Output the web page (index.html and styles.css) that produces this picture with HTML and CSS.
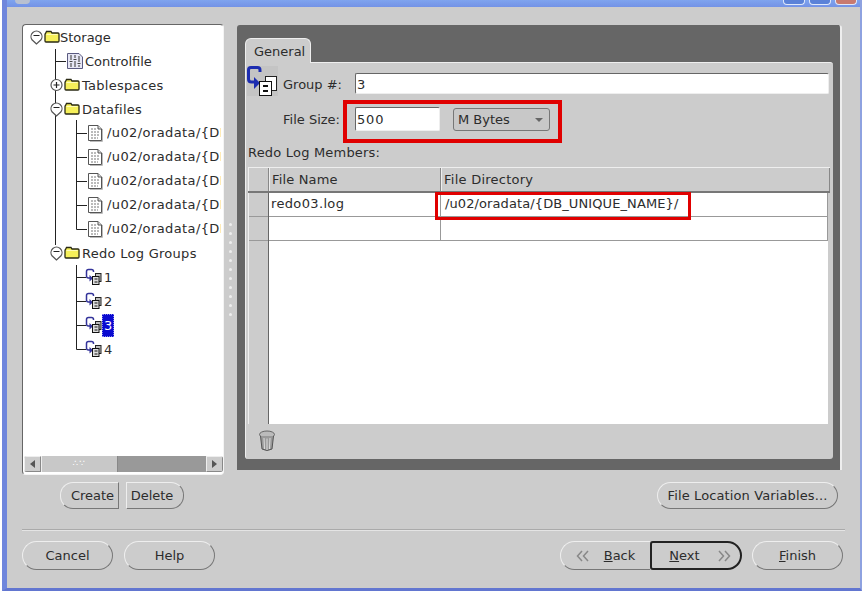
FILE: index.html
```html
<!DOCTYPE html>
<html lang="en">
<head>
<meta charset="utf-8">
<title>Storage</title>
<link rel="stylesheet" href="styles.css">
</head>
<body>
<svg class="defs" width="0" height="0" aria-hidden="true">
  <symbol id="folder" viewBox="0 0 16 14">
    <path d="M1.500 3.500 L2.500 1.500 H7 L8 3 H14 Q15 3 15 4 V11 Q15 12 14 12 H2 Q1 12 1 11 V4.500 Q1 3.500 1.500 3.500Z" fill="#f6f05a" stroke="#2a2a14" stroke-width="1.300"/>
    <path d="M2.500 4.500 H13.500" stroke="#fffcb8" stroke-width="1"/>
  </symbol>
  <symbol id="minus" viewBox="0 0 15 16">
    <path d="M7.500 15 L3 10.800 A5.500 5.500 0 1 1 12 10.800Z" fill="#fff" stroke="#555" stroke-width="1.200"/>
    <path d="M4.500 6.500 H10.500" stroke="#222" stroke-width="1.200"/>
  </symbol>
  <symbol id="plus" viewBox="0 0 15 16">
    <circle cx="7.500" cy="8" r="5.500" fill="#fff" stroke="#555" stroke-width="1.200"/>
    <path d="M4.500 8 H10.500 M7.500 5 V11" stroke="#222" stroke-width="1.200"/>
  </symbol>
  <symbol id="doc" viewBox="0 0 16 18">
    <path d="M1.500 1.500 H11 L14.500 5 V16.500 H1.500Z" fill="#fff" stroke="#555" stroke-width="1"/>
    <path d="M11 1.500 V5 H14.500" fill="#ddd" stroke="#555"/>
    <path d="M4 5 H9 M4 8 H12 M4 11 H12 M4 14 H11" stroke="#777" stroke-width="1" stroke-dasharray="2 1"/>
    <path d="M15.500 5 V17.500 H3" fill="none" stroke="#bbb"/>
  </symbol>
  <symbol id="ctl" viewBox="0 0 18 18">
    <path d="M1.500 1.500 H13 L16.500 5 V16.500 H1.500Z" fill="#e6e6f4" stroke="#5a5a80"/>
    <path d="M5 3 V8 M5 11 V15 M9 3 V6 M9 9 V15 M13 4 V10 M13 13 V15" stroke="#444" stroke-width="1.100"/>
    <path d="M3.500 9.500 H6.500 M7.500 7.500 H10.500 M11.500 11.500 H14.500" stroke="#444" stroke-width="1.100"/>
  </symbol>
  <symbol id="grp" viewBox="0 0 17 18">
    <path d="M8.500 4 V3.500 Q8.500 1.500 6.500 1.500 H3.500 Q1.500 1.500 1.500 3.500 V8 Q1.500 10 3.500 10 H5" fill="none" stroke="#33339a" stroke-width="1.500"/>
    <path d="M4.500 7 L8 10.300 L4.500 13.500Z" fill="#33339a"/>
    <rect x="10.500" y="5.500" width="5.500" height="8" fill="#bbb" stroke="#222"/>
    <rect x="7.500" y="8.500" width="6.500" height="8" fill="#ddd" stroke="#111"/>
    <path d="M9.500 11 H12.500 M9.500 14 H12.500" stroke="#111"/>
  </symbol>
</svg>

<div class="frame">
  <header class="titlebar">
    <span class="ticon"></span>
    <span class="tbtns"><i class="tb"></i><i class="tb"></i><i class="tb tb-close"></i></span>
  </header>

  <main class="content">
    <div class="split">
      <section class="treebox">
        <div class="tree">
          <svg class="lines" width="198" height="340" aria-hidden="true">
            <path d="M32.500 24 V220 M32.500 36.500 H43 M53.500 95 V204.500 H64 M53.500 108.500 H64 M53.500 132.500 H64 M53.500 156.500 H64 M53.500 180.500 H64 M53.500 240 V324.500 H63 M53.500 252.500 H63 M53.500 276.500 H63 M53.500 300.500 H63" fill="none" stroke="#222" stroke-width="1"/>
          </svg>
          <div class="row l0"><svg class="exp"><use href="#minus"/></svg><svg class="fld"><use href="#folder"/></svg><span>Storage</span></div>
          <div class="row lc"><svg class="ctl"><use href="#ctl"/></svg><span>Controlfile</span></div>
          <div class="row l1"><svg class="exp"><use href="#plus"/></svg><svg class="fld"><use href="#folder"/></svg><span class="gap2">Tablespaces</span></div>
          <div class="row l1"><svg class="exp"><use href="#minus"/></svg><svg class="fld"><use href="#folder"/></svg><span class="gap2">Datafiles</span></div>
          <div class="row lf"><svg class="doc"><use href="#doc"/></svg><span class="path">/u02/oradata/{DB</span></div>
          <div class="row lf"><svg class="doc"><use href="#doc"/></svg><span class="path">/u02/oradata/{DB</span></div>
          <div class="row lf"><svg class="doc"><use href="#doc"/></svg><span class="path">/u02/oradata/{DB</span></div>
          <div class="row lf"><svg class="doc"><use href="#doc"/></svg><span class="path">/u02/oradata/{DB</span></div>
          <div class="row lf"><svg class="doc"><use href="#doc"/></svg><span class="path">/u02/oradata/{DB</span></div>
          <div class="row l1"><svg class="exp"><use href="#minus"/></svg><svg class="fld"><use href="#folder"/></svg><span class="gap2">Redo Log Groups</span></div>
          <div class="row lg"><svg class="grp"><use href="#grp"/></svg><span>1</span></div>
          <div class="row lg"><svg class="grp"><use href="#grp"/></svg><span>2</span></div>
          <div class="row lg"><svg class="grp"><use href="#grp"/></svg><span class="sel">3</span></div>
          <div class="row lg"><svg class="grp"><use href="#grp"/></svg><span>4</span></div>
        </div>
        <div class="hscroll">
          <span class="sbtn"><i class="arr-l"></i></span>
          <span class="thumb">∴∵</span>
          <span class="track"></span>
          <span class="sbtn sbtn-r"><i class="arr-r"></i></span>
        </div>
      </section>

      <div class="splitter"><i></i><i></i><i></i><i></i><i></i><i></i><i></i><i></i><i></i><i></i><i></i></div>

      <section class="tabs">
        <div class="tab">General</div>
        <div class="panel">
          <div class="f-group">
            <svg class="gicon" width="31" height="30" viewBox="0 0 31 30" aria-hidden="true">
              <rect x="0" y="0" width="31" height="30" fill="#c4c4c4"/>
              <path d="M13 6 V4 Q13 1.500 10.500 1.500 H4 Q1.500 1.500 1.500 4 V13 Q1.500 16 4.500 16 H9" fill="none" stroke="#1c2cb0" stroke-width="3"/>
              <path d="M7 11 L13 17 L7 23Z" fill="#1c2cb0"/>
              <rect x="18.500" y="10.500" width="11" height="14" fill="#fff" stroke="#222"/>
              <rect x="12.500" y="15.500" width="12" height="14" fill="#fff" stroke="#111"/>
              <path d="M16 20 H21 M16 25 H21" stroke="#111" stroke-width="2"/>
            </svg>
            <label class="lbl-g">Group #:</label>
            <div class="input grow">3</div>
          </div>
          <div class="f-size">
            <label class="lbl-s">File Size:</label>
            <div class="redbox">
              <div class="input sz">500</div>
              <div class="combo"><span>M Bytes</span><i class="caret"></i></div>
            </div>
          </div>
          <div class="members">Redo Log Members:</div>
          <div class="table">
            <div class="thead">
              <div class="th-corner"></div>
              <div class="th">File Name</div>
              <div class="th">File Directory</div>
            </div>
            <div class="tbody">
              <div class="rowheads"><div class="rh"></div><div class="rh"></div></div>
              <div class="cells">
                <div class="tr"><div class="td">redo03.log</div><div class="td">/u02/oradata/{DB_UNIQUE_NAME}/</div></div>
                <div class="tr"><div class="td"></div><div class="td"></div></div>
              </div>
            </div>
            <div class="redcell"></div>
          </div>
          <div class="panel-foot">
            <svg width="18" height="22" viewBox="0 0 18 22" aria-hidden="true">
              <ellipse cx="9" cy="4.500" rx="7.500" ry="3.500" fill="#bbb" stroke="#666"/>
              <path d="M2.500 6 L4 19 Q9 22 14 19 L15.500 6" fill="#999" stroke="#555"/>
              <path d="M6 8 L6.500 19 M9 8.500 V20 M12 8 L11.500 19" stroke="#ddd"/>
            </svg>
          </div>
        </div>
      </section>
    </div>

    <div class="actions">
      <div class="pair">
        <button class="btn seg-l" type="button">Create</button>
        <button class="btn seg-r" type="button">Delete</button>
      </div>
      <button class="btn flv" type="button">File Location Variables...</button>
    </div>

    <hr class="sep">

    <footer class="nav">
      <div class="nav-l">
        <button class="btn wide" type="button">Cancel</button>
        <button class="btn wide" type="button">Help</button>
      </div>
      <div class="nav-r">
        <div class="wiz">
          <button class="btn back" type="button"><svg width="14" height="14" viewBox="0 0 14 14" aria-hidden="true"><path d="M6 2 L1.500 7 L6 12 M12 2 L7.500 7 L12 12" fill="none" stroke="#888" stroke-width="1.500"/></svg><span><u>B</u>ack</span></button>
          <button class="btn next" type="button"><span><u>N</u>ext</span><svg width="14" height="14" viewBox="0 0 14 14" aria-hidden="true"><path d="M2 2 L6.500 7 L2 12 M8 2 L12.500 7 L8 12" fill="none" stroke="#888" stroke-width="1.500"/></svg></button>
        </div>
        <button class="btn wide" type="button"><span><u>F</u>inish</span></button>
      </div>
    </footer>
  </main>
</div>
</body>
</html>
```

FILE: styles.css
```css
* { box-sizing: border-box; }
html, body { margin: 0; padding: 0; background: #fff; }
body { width: 864px; height: 595px; overflow: hidden; font: 13px/1 "DejaVu Sans", sans-serif; color: #2c2c2c; }
.defs { position: absolute; }

.frame { width: 860px; height: 591px; margin-left: 2px; background: #ccc; border-left: 5px solid #6f86dc; border-right: 2px solid #8ea2e0; border-bottom: 3px solid #6276d0; display: flex; flex-direction: column; }

.titlebar { height: 7px; background: linear-gradient(#7fa4ee, #7392e6); display: flex; justify-content: space-between; flex: none; overflow: hidden; }
.ticon { width: 15px; height: 4px; margin-left: 8px; background: #b8c0d0; border-radius: 0 0 7px 7px; }
.tbtns { display: flex; gap: 4px; margin-right: 3px; }
.tb { width: 22px; height: 5px; background: #5b82d8; border: 1px solid #dfe8fa; border-top: 0; border-radius: 0 0 4px 4px; }
.tb-close { background: #c87a70; }

.content { padding: 17px 15px 0 15px; flex: 1; display: flex; flex-direction: column; }
.split { display: flex; height: 451px; flex: none; }

.treebox { width: 202px; height: 451px; background: #fff; border: 1px solid #f4f4f4; border-top-color: #666; border-left-color: #666; border-radius: 4px; display: flex; flex-direction: column; overflow: hidden; }
.tree { position: relative; flex: 1; overflow: hidden; }
.lines { position: absolute; left: 0; top: 0; }
.row { position: relative; height: 24px; display: flex; align-items: center; white-space: nowrap; }
.row svg { flex: none; }
.l0 { padding-left: 6px; }
.l1 { padding-left: 26px; }
.lc { padding-left: 43px; }
.lf { padding-left: 64px; }
.lg { padding-left: 62px; }
.exp { width: 15px; height: 16px; }
.fld { width: 16px; height: 14px; }
.ctl { width: 18px; height: 18px; margin-right: 1px; }
.doc { width: 16px; height: 18px; margin-right: 4px; }
.grp { width: 17px; height: 18px; margin-right: 2px; }
.gap2 { margin-left: 2px; letter-spacing: .28px; }
.path { display: block; width: 114px; overflow: hidden; letter-spacing: .4px; line-height: 16px; }
.sel { background: #0a0ad0; color: #fff; padding: 5px 2px; margin-left: -2px; outline: 1px dotted #8888ee; outline-offset: -1px; }

.hscroll { height: 16px; margin: 0 0 2px 1px; display: flex; background: #ccc; border-radius: 3px; overflow: hidden; flex: none; }
.sbtn { width: 17px; background: #ccc; border: 1px solid #888; border-top-color: #eee; border-left-color: #eee; display: flex; align-items: center; justify-content: center; flex: none; }
.thumb { width: 77px; background: #c8c8c8; border-left: 1px solid #eee; border-right: 1px solid #888; color: #fff; font-size: 9px; letter-spacing: 1px; text-align: center; line-height: 15px; flex: none; }
.track { flex: 1; background: #999; }
.arr-l { border: 4px solid transparent; border-right: 5px solid #555; border-left: 0; }
.arr-r { border: 4px solid transparent; border-left: 5px solid #555; border-right: 0; }

.splitter { width: 13px; display: flex; flex-direction: column; align-items: center; justify-content: center; gap: 6px; padding-top: 40px; flex: none; }
.splitter i { width: 3px; height: 3px; background: #eee; border-radius: 50%; }

.tabs { width: 605px; height: 445px; margin-top: 1px; background: #666; border-right: 2px solid #eee; border-radius: 3px 3px 0 0; padding: 13px 7px 11px 8px; display: flex; flex-direction: column; flex: none; position: relative; }
.tab { width: 66px; height: 25px; margin-bottom: -1px; background: #ccc; border: 1px solid #eee; border-bottom: 0; border-radius: 6px 6px 0 0; padding: 6px 0 0 8px; position: relative; z-index: 1; }
.panel { flex: 1; background: #ccc; border-top: 1px solid #eee; border-left: 1px solid #eee; border-radius: 0 3px 3px 3px; display: flex; flex-direction: column; min-height: 0; }

.f-group { display: flex; align-items: flex-start; padding-top: 3px; height: 33px; padding-left: 1px; flex: none; }
.gicon { flex: none; }
.lbl-g { margin: 12px 0 0 5px; width: 72px; }
.input { background: #fff; border: 1px solid #eee; border-top-color: #666; border-left-color: #666; padding: 4px 1px; height: 21px; border-radius: 2px; }
.grow { flex: 1; margin: 7px 4px 0 0; }
.f-size { display: flex; align-items: flex-start; margin-top: 4px; flex: none; }
.lbl-s { margin: 13px 0 0 37px; width: 60px; }
.redbox { width: 219px; height: 43px; border: 4px solid #e00000; padding: 3px 8px 0; display: flex; gap: 13px; align-items: flex-start; }
.sz { width: 85px; height: 24px; padding-top: 5px; letter-spacing: .8px; }
.combo { width: 97px; height: 23px; margin-top: 1px; border: 1px solid #777; border-radius: 3px; background: #c8c8c8; display: flex; align-items: center; justify-content: space-between; padding: 0 6px 0 4px; }
.caret { border: 4px solid transparent; border-top: 4px solid #666; border-bottom: 0; }
.members { height: 18px; margin: 2px 0 4px 2px; padding-top: 1px; letter-spacing: .2px; flex: none; }

.table { position: relative; flex: 1; margin-left: 2px; width: 582px; display: flex; flex-direction: column; border-top: 1px solid #eee; min-height: 0; }
.thead { height: 25px; display: grid; grid-template-columns: 21px 172px 1fr; background: #ccc; border-bottom: 2px solid #777; flex: none; }
.th-corner, .th { border-right: 1px solid #888; border-left: 1px solid #eee; }
.th { padding: 5px 0 0 2px; letter-spacing: .15px; }
.th:last-child { letter-spacing: .25px; }
.tbody { flex: 1; display: flex; }
.rowheads { width: 21px; background: #ccc; border-left: 1px solid #eee; border-right: 1px solid #666; flex: none; }
.rh { height: 24px; border-bottom: 1px solid #999; }
.cells { width: 559px; background: #fff; }
.tr { height: 24px; display: grid; grid-template-columns: 172px 1fr; border-bottom: 1px solid #999; }
.td { padding: 4px 0 0 2px; border-right: 1px solid #999; letter-spacing: .35px; }
.td:last-child { padding-left: 4px; letter-spacing: .1px; }
.redcell { position: absolute; left: 187px; top: 24px; width: 256px; height: 28px; border: 3px solid #e00000; }

.panel-foot { height: 35px; padding: 6px 0 0 12px; flex: none; }

.actions { display: flex; justify-content: space-between; margin-top: 7px; height: 27px; padding: 0 7px 0 38px; flex: none; }
.pair { display: flex; gap: 7px; }
.btn { font: inherit; color: #2c2c2c; background: #ccc; border: 1px solid #aaa; border-right-color: #777; border-bottom-color: #777; border-top-color: #eee; border-left-color: #eee; border-radius: 14px; padding: 0; display: flex; align-items: center; justify-content: center; }
.seg-l { width: 59px; border-radius: 13px 0 0 13px; padding-left: 6px; }
.seg-r { width: 58px; border-radius: 0 13px 13px 0; padding-right: 6px; }
.flv { width: 181px; letter-spacing: .12px; }

.sep { width: 823px; height: 2px; margin: 20px 0 10px 0; border: 0; border-top: 1px solid #aaa; border-bottom: 1px solid #e4e4e4; flex: none; }

.nav { display: flex; justify-content: space-between; height: 29px; padding-right: 2px; flex: none; }
.nav-l, .nav-r, .wiz { display: flex; }
.nav-l { gap: 11px; }
.wide { width: 91px; border-radius: 15px; }
.nav-r { gap: 10px; }
.back { width: 90px; border-radius: 15px 0 0 15px; gap: 14px; border-right: 0; }
.next { width: 92px; border: 2px solid #222; border-radius: 3px 15px 15px 3px; gap: 17px; padding-left: 8px; }
```
